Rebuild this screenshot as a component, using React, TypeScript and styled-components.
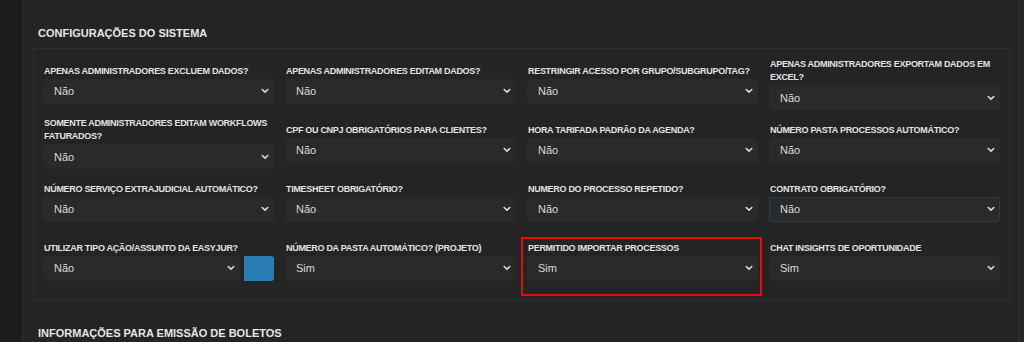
import React from 'react'
import styled, { createGlobalStyle } from 'styled-components'

type Field = {
    label: string
    value: string
    focused?: boolean
    withButton?: boolean
    highlighted?: boolean
}

const fields: Field[] = [
    { label: 'Apenas administradores excluem dados?', value: 'Não' },
    { label: 'Apenas administradores editam dados?', value: 'Não' },
    { label: 'Restringir acesso por grupo/subgrupo/tag?', value: 'Não' },
    { label: 'Apenas administradores exportam dados em Excel?', value: 'Não' },
    { label: 'Somente administradores editam workflows faturados?', value: 'Não' },
    { label: 'CPF ou CNPJ obrigatórios para clientes?', value: 'Não' },
    { label: 'Hora tarifada padrão da agenda?', value: 'Não' },
    { label: 'Número pasta processos automático?', value: 'Não' },
    { label: 'Número serviço extrajudicial automático?', value: 'Não' },
    { label: 'Timesheet obrigatório?', value: 'Não' },
    { label: 'Numero do processo repetido?', value: 'Não' },
    { label: 'Contrato obrigatório?', value: 'Não', focused: true },
    { label: 'Utilizar tipo ação/assunto da EasyJur?', value: 'Não', withButton: true },
    { label: 'Número da pasta automático? (Projeto)', value: 'Sim' },
    { label: 'Permitido importar processos', value: 'Sim', highlighted: true },
    { label: 'Chat insights de oportunidade', value: 'Sim' },
]

const Chevron = () => (
    <svg width="8" height="6" viewBox="0 0 8 6">
        <path d="M1.2 1.5 L4 4.2 L6.8 1.5" fill="none" stroke="#dadada" strokeWidth="1.6" strokeLinecap="round" strokeLinejoin="round" />
    </svg>
)

const App = () => {
    return (
        <Page>
            <GlobalStyle />
            <Sidebar />
            <Main>
                <SectionTitle>Configurações do sistema</SectionTitle>
                <Fieldset>
                    {
                        fields.map(( field ) => (
                            <Cell key={field.label} $highlighted={field.highlighted}>
                                <Label>{field.label}</Label>
                                <SelectRow>
                                    <Select $focused={field.focused}>
                                        <span>{field.value}</span>
                                        <Chevron />
                                    </Select>
                                    {field.withButton && <SideButton />}
                                </SelectRow>
                            </Cell>
                    ))}
                </Fieldset>
                <SectionTitle>Informações para emissão de boletos</SectionTitle>
            </Main>
            <RightRail />
        </Page>
    )
}

const GlobalStyle = createGlobalStyle`
    html, body {
        margin: 0;
        padding: 0;
        background: #242424;
        overflow: hidden;
    }
    * { box-sizing: border-box; }
`

const Page = styled.div`
    display: flex;
    width: 1024px;
    height: 342px;
    background: #242424;
    font-family: "Liberation Sans", Arial, sans-serif;
    overflow: hidden;
`

const Sidebar = styled.div`
    width: 23px;
    flex-shrink: 0;
    background: #1c1c1c;
    border-right: 1px solid #2a2a2a;
`

const RightRail = styled.div`
    width: 6px;
    flex-shrink: 0;
    background: #262626;
    border-left: 1px solid #2f2f2f;
`

const Main = styled.div`
    flex: 1;
    padding: 27px 8px 0 10px;
    display: flex;
    flex-direction: column;
`

const SectionTitle = styled.h2`
    margin: 0 0 0 5px;
    font-size: 11px;
    line-height: 13px;
    font-weight: bold;
    color: #e6e6e6;
    text-transform: uppercase;
    & + div { margin-top: 8px; }
    div + & { margin-top: 26px; }
`

const Fieldset = styled.div`
    display: grid;
    grid-template-columns: repeat(4, 231px);
    grid-auto-rows: 48px;
    column-gap: 11px;
    row-gap: 11px;
    align-items: center;
    padding: 11px 9px 15px 9px;
    border: 1px solid #2e2e2e;
    background: #242424;
`

const Cell = styled.div<{ $highlighted?: boolean }>`
    position: relative;
    display: flex;
    flex-direction: column;
    gap: 1px;

    ${({ $highlighted }) => $highlighted && `
        &::after {
            content: '';
            position: absolute;
            top: -5px;
            left: -6px;
            right: -4px;
            bottom: -15px;
            border: 2px solid #e30b0b;
            pointer-events: none;
        }
    `}
`

const Label = styled.label`
    padding-left: 1px;
    font-size: 9px;
    line-height: 13px;
    font-weight: bold;
    color: #e2e2e2;
    text-transform: uppercase;
    letter-spacing: -0.3px;
`

const SelectRow = styled.div`
    display: flex;
    gap: 4px;
`

const Select = styled.div<{ $focused?: boolean }>`
    flex: 1;
    height: 25px;
    display: flex;
    align-items: center;
    justify-content: space-between;
    padding: 0 4px 0 10px;
    background: #2a2a2a;
    border: 1px solid ${({ $focused }) => $focused ? '#283c49' : '#2a2a2a'};
    border-radius: 3px;
    font-size: 11px;
    color: #dadada;
`

const SideButton = styled.div`
    width: 30px;
    height: 25px;
    background: #2a7db0;
    border-radius: 0 3px 3px 0;
`

export default App
